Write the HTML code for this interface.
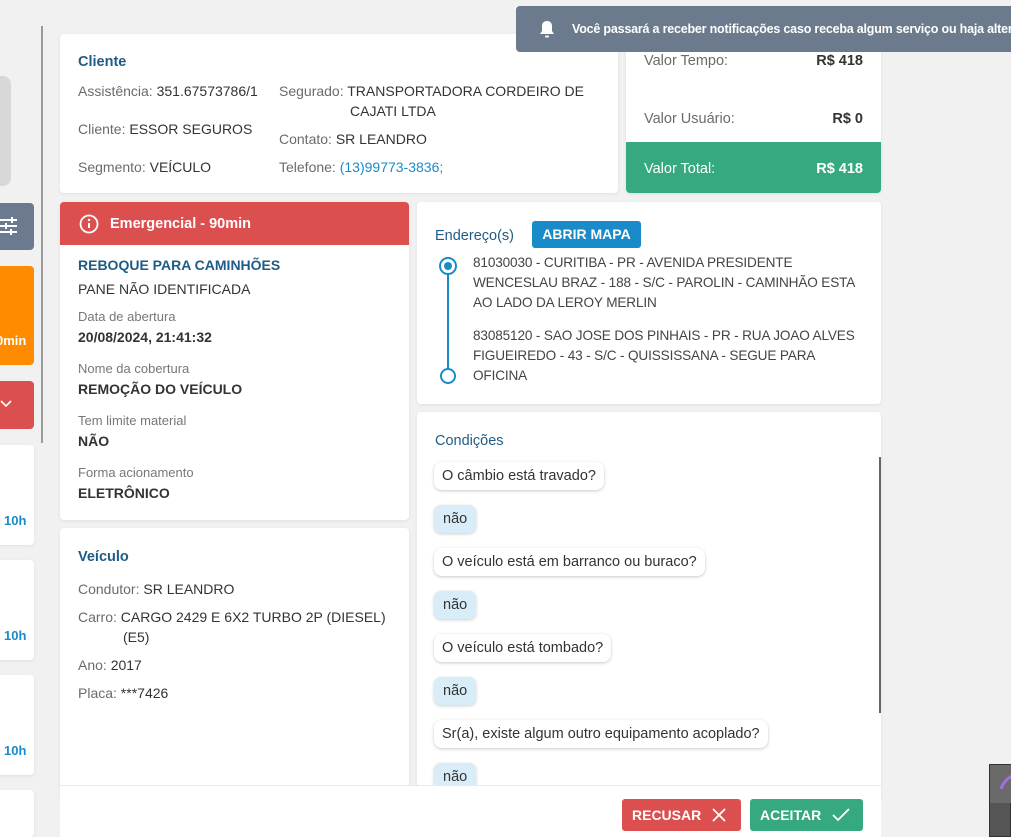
<!DOCTYPE html>
<html style="overflow:hidden;height:837px"><head><meta charset="utf-8"><style>
*{box-sizing:border-box;margin:0;padding:0}
body{width:1011px;height:837px;overflow:hidden;background:#f1f1f1;font-family:"Liberation Sans",sans-serif;font-size:14px;color:#333;position:relative}
.a{position:absolute}
.card{position:absolute;background:#fff;border-radius:4px;box-shadow:0 1px 3px rgba(0,0,0,.08)}
.g{color:#6b6b6b}
.t{color:#1f5c85;font-weight:bold;font-size:14.5px}
.lbl{color:#777;font-size:13px}
.b{font-weight:bold;color:#333}
.q{position:absolute;left:17px;height:28px;line-height:28px;padding:0 8px;background:#fff;border-radius:8px;box-shadow:0 1px 3px rgba(0,0,0,.22);font-size:14.5px;color:#333;white-space:nowrap}
.n{position:absolute;left:17px;height:28px;line-height:28px;padding:0 9px;background:#d8edf8;border-radius:7px;box-shadow:0 1px 3px rgba(0,0,0,.2);font-size:14.5px;color:#333}
.ad{position:absolute;left:56px;line-height:20px;color:#444;white-space:nowrap;font-size:13.6px;letter-spacing:-.15px}
</style></head><body>
<div class="a" style="left:41px;top:26px;width:2px;height:417px;background:#9a9a9a"></div>
<div class="a" style="left:-10px;top:76px;width:21px;height:110px;background:#d8d8d8;border-radius:8px"></div>
<div class="a" style="left:-6px;top:203px;width:40px;height:47px;background:#6b7a8e;border-radius:4px"></div>
<svg class="a" style="left:0;top:216px" width="20" height="20" viewBox="0 0 20 20" stroke="#fff" stroke-width="2"><path d="M0 4h17M0 10h17M0 16h17"/><path d="M12 1v6M6 7v6M11 13v6"/></svg>
<div class="a" style="left:-6px;top:266px;width:40px;height:99px;background:#ff8c00;border-radius:4px"></div>
<div class="a" style="left:-4px;top:333px;color:#fff;font-weight:bold;font-size:13px">0min</div>
<div class="a" style="left:-6px;top:381px;width:40px;height:48px;background:#dc4f4f;border-radius:4px"></div>
<svg class="a" style="left:0;top:399px" width="12" height="10" viewBox="0 0 12 10"><path d="M1 2l5 5 5-5" stroke="#fff" stroke-width="1.6" fill="none"/></svg>
<div class="card" style="left:-6px;top:445px;width:40px;height:100px"></div>
<div class="a" style="left:4px;top:513px;color:#1a8bc9;font-weight:bold;font-size:13px">10h</div>
<div class="card" style="left:-6px;top:560px;width:40px;height:100px"></div>
<div class="a" style="left:4px;top:628px;color:#1a8bc9;font-weight:bold;font-size:13px">10h</div>
<div class="card" style="left:-6px;top:675px;width:40px;height:100px"></div>
<div class="a" style="left:4px;top:743px;color:#1a8bc9;font-weight:bold;font-size:13px">10h</div>
<div class="card" style="left:-6px;top:790px;width:40px;height:47px"></div>

<div class="card" style="left:60px;top:34px;width:558px;height:159px">
 <div class="a t" style="left:18px;top:20px">Cliente</div>
 <div class="a" style="left:18px;top:49px"><span class="g">Assistência:</span> 351.67573786/1</div>
 <div class="a" style="left:18px;top:87px"><span class="g">Cliente:</span> ESSOR SEGUROS</div>
 <div class="a" style="left:18px;top:125px"><span class="g">Segmento:</span> VEÍCULO</div>
 <div class="a" style="left:219px;top:49px;white-space:nowrap"><span class="g">Segurado:</span> TRANSPORTADORA CORDEIRO DE</div>
 <div class="a" style="left:290px;top:69px">CAJATI LTDA</div>
 <div class="a" style="left:219px;top:97px"><span class="g">Contato:</span> SR LEANDRO</div>
 <div class="a" style="left:219px;top:125px"><span class="g">Telefone:</span> <span style="color:#1a8bc9">(13)99773-3836;</span></div>
</div>

<div class="card" style="left:626px;top:30px;width:255px;height:163px;overflow:hidden">
 <div class="a g" style="left:18px;top:23px;font-size:14.5px">Valor Tempo:</div>
 <div class="a b" style="right:18px;top:23px;font-size:14.5px">R$ 418</div>
 <div class="a g" style="left:18px;top:81px;font-size:14.5px">Valor Usuário:</div>
 <div class="a b" style="right:18px;top:81px;font-size:14.5px">R$ 0</div>
 <div class="a" style="left:0;top:112px;width:255px;height:51px;background:#36a97f"></div>
 <div class="a" style="left:18px;top:131px;font-size:14.5px;color:#fff">Valor Total:</div>
 <div class="a" style="right:18px;top:131px;font-size:14.5px;color:#fff;font-weight:bold">R$ 418</div>
</div>

<div class="a" style="left:516px;top:6px;width:520px;height:46px;background:#6b7a8c;border-radius:4px;overflow:hidden">
 <svg class="a" style="left:23px;top:14px" width="16" height="18" viewBox="0 0 16 18"><path d="M8 1c-3 0-5 2-5 5v5l-2 3h14l-2-3V6c0-3-2-5-5-5z" fill="#fff"/><rect x="6" y="15.5" width="4" height="2" rx="1" fill="#fff"/></svg>
 <div class="a" style="left:56px;top:16px;color:#fff;font-weight:bold;font-size:12.5px;white-space:nowrap;letter-spacing:-.2px">Você passará a receber notificações caso receba algum serviço ou haja alteração</div>
</div>

<div class="card" style="left:60px;top:202px;width:349px;height:318px;overflow:hidden">
 <div class="a" style="left:0;top:0;width:349px;height:43px;background:#dc4f4f"></div>
 <svg class="a" style="left:19px;top:12px" width="20" height="20" viewBox="0 0 20 20"><circle cx="10" cy="10" r="8.5" stroke="#fff" stroke-width="1.8" fill="none"/><path d="M10 9v5" stroke="#fff" stroke-width="2"/><circle cx="10" cy="6" r="1.2" fill="#fff"/></svg>
 <div class="a" style="left:50px;top:14px;color:#fff;font-weight:bold;font-size:14.5px">Emergencial - 90min</div>
 <div class="a t" style="left:18px;top:55px;font-size:14px">REBOQUE PARA CAMINHÕES</div>
 <div class="a" style="left:18px;top:79px">PANE NÃO IDENTIFICADA</div>
 <div class="a lbl" style="left:18px;top:107px">Data de abertura</div>
 <div class="a b" style="left:18px;top:127px">20/08/2024, 21:41:32</div>
 <div class="a lbl" style="left:18px;top:159px">Nome da cobertura</div>
 <div class="a b" style="left:18px;top:179px">REMOÇÃO DO VEÍCULO</div>
 <div class="a lbl" style="left:18px;top:211px">Tem limite material</div>
 <div class="a b" style="left:18px;top:231px">NÃO</div>
 <div class="a lbl" style="left:18px;top:263px">Forma acionamento</div>
 <div class="a b" style="left:18px;top:283px">ELETRÔNICO</div>
</div>

<div class="card" style="left:60px;top:528px;width:349px;height:270px">
 <div class="a t" style="left:18px;top:21px">Veículo</div>
 <div class="a" style="left:18px;top:53px"><span class="g">Condutor:</span> SR LEANDRO</div>
 <div class="a" style="left:18px;top:81px;white-space:nowrap"><span class="g">Carro:</span> CARGO 2429 E 6X2 TURBO 2P (DIESEL)</div>
 <div class="a" style="left:63px;top:101px">(E5)</div>
 <div class="a" style="left:18px;top:129px"><span class="g">Ano:</span> 2017</div>
 <div class="a" style="left:18px;top:157px"><span class="g">Placa:</span> ***7426</div>
</div>

<div class="card" style="left:417px;top:202px;width:464px;height:202px">
 <div class="a t" style="left:18px;top:26px;font-weight:normal">Endereço(s)</div>
 <div class="a" style="left:115px;top:19px;width:109px;height:27px;background:#1a8bc9;border-radius:3px;color:#fff;font-weight:bold;font-size:14px;text-align:center;line-height:27px">ABRIR MAPA</div>
 <div class="a" style="left:30px;top:68px;width:2px;height:106px;background:#1a8bc9"></div>
 <div class="a" style="left:22px;top:55px;width:18px;height:18px;border:2px solid #1a8bc9;border-radius:50%;background:#fff"></div>
 <div class="a" style="left:27px;top:60px;width:8px;height:8px;border-radius:50%;background:#1a8bc9"></div>
 <div class="a" style="left:23px;top:166px;width:16px;height:16px;border:2px solid #1a8bc9;border-radius:50%;background:#fff"></div>
 <div class="ad" style="top:51px">81030030 - CURITIBA - PR - AVENIDA PRESIDENTE<br>WENCESLAU BRAZ - 188 - S/C - PAROLIN - CAMINHÃO ESTA<br>AO LADO DA LEROY MERLIN</div>
 <div class="ad" style="top:124px">83085120 - SAO JOSE DOS PINHAIS - PR - RUA JOAO ALVES<br>FIGUEIREDO - 43 - S/C - QUISSISSANA - SEGUE PARA<br>OFICINA</div>
</div>

<div class="card" style="left:417px;top:412px;width:464px;height:390px;overflow:hidden">
 <div class="a t" style="left:18px;top:21px;font-weight:normal">Condições</div>
 <div class="a" style="left:462px;top:45px;width:2px;height:256px;background:#666"></div>
 <div class="q" style="top:50px">O câmbio está travado?</div>
 <div class="n" style="top:93px">não</div>
 <div class="q" style="top:136px">O veículo está em barranco ou buraco?</div>
 <div class="n" style="top:179px">não</div>
 <div class="q" style="top:222px">O veículo está tombado?</div>
 <div class="n" style="top:265px">não</div>
 <div class="q" style="top:308px">Sr(a), existe algum outro equipamento acoplado?</div>
 <div class="n" style="top:351px">não</div>
</div>

<div class="a" style="left:60px;top:785px;width:821px;height:52px;background:#fff;border-top:1px solid #eaeaea"></div>
<div class="a" style="left:622px;top:799px;width:119px;height:32px;background:#dc4f4f;border-radius:3px;color:#fff;font-weight:bold;font-size:14px;line-height:32px;padding-left:10px">RECUSAR
 <svg class="a" style="left:90px;top:9px" width="14" height="14" viewBox="0 0 14 14"><path d="M1 1l12 12M13 1L1 13" stroke="#fff" stroke-width="1.8"/></svg></div>
<div class="a" style="left:750px;top:799px;width:113px;height:32px;background:#36a97f;border-radius:3px;color:#fff;font-weight:bold;font-size:14px;line-height:32px;padding-left:10px">ACEITAR
 <svg class="a" style="left:82px;top:9px" width="18" height="14" viewBox="0 0 18 14"><path d="M1 7l5 5L17 1" stroke="#fff" stroke-width="1.8" fill="none"/></svg></div>

<div class="a" style="left:989px;top:764px;width:22px;height:73px;background:#555;border:1px solid #333"></div>
<div class="a" style="left:990px;top:765px;width:21px;height:38px;background:#6a6a6a"></div>
<svg class="a" style="left:1000px;top:775px" width="11" height="16" viewBox="0 0 11 16"><path d="M1 14Q4 5 12 1" stroke="#a36ee0" stroke-width="3" fill="none"/></svg>
</body></html>
